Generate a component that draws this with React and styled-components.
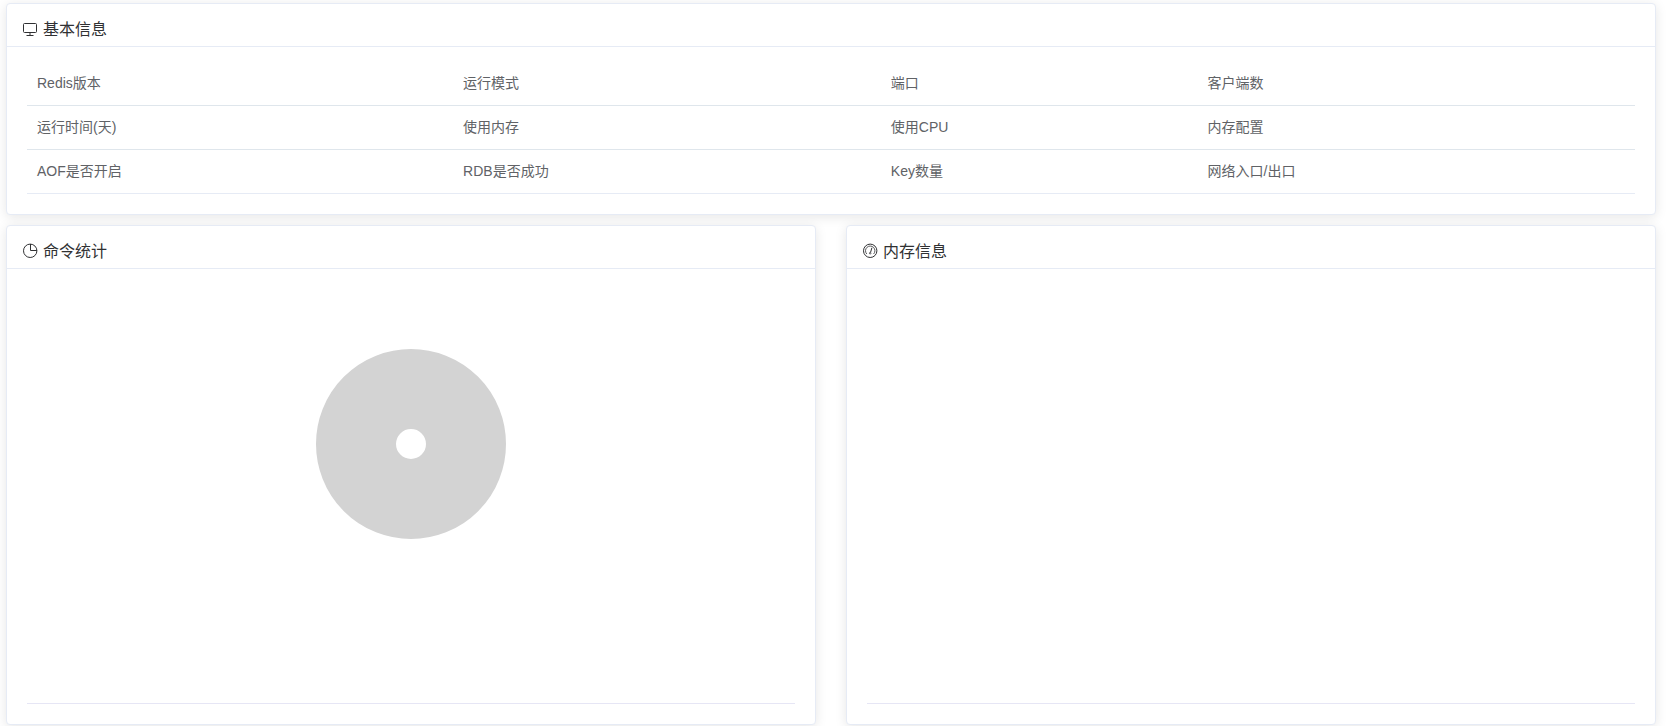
import React from "react";
import styled, { createGlobalStyle } from "styled-components";

const GlobalStyle = createGlobalStyle`
  *, *::before, *::after { box-sizing: border-box; }
  body {
    margin: 0;
    background: #fff;
    color: #606266;
    font-family: "Liberation Sans", "Noto Sans CJK SC", sans-serif;
    font-size: 14px;
  }
`;

const Page = styled.main`
  display: grid;
  grid-template-columns: 1fr 1fr;
  gap: 10px 30px;
  padding: 3px 12px 1px 6px;
`;

const Card = styled.section`
  grid-column: ${(p) => (p.$wide ? "1 / -1" : "auto")};
  min-width: 0;
  background: #fff;
  border: 1px solid #e6ebf5;
  border-radius: 4px;
  box-shadow: 0 2px 12px rgba(0, 0, 0, 0.1);
`;

const CardHeader = styled.header`
  display: flex;
  align-items: flex-start;
  gap: 5px;
  padding: 16px 15px 6px;
  border-bottom: 1px solid #e6ebf5;
  color: #303133;
`;

const CardTitle = styled.h2`
  margin: 0;
  font-size: 16px;
  font-weight: 400;
  line-height: 20px;
`;

const CardBody = styled.div`
  padding: 15px 20px 20px;
`;

const Icon = styled.svg`
  width: 16px;
  height: 16px;
  fill: none;
  stroke: currentColor;
  stroke-width: 1;
`;

const InfoTable = styled.table`
  width: 100%;
  table-layout: fixed;
  border-collapse: separate;
  border-spacing: 0;
`;

const Column = styled.col`
  width: ${(p) => p.$share};
`;

const Cell = styled.td`
  height: 44px;
  padding: 10px;
  border-bottom: 1px solid ${(p) => (p.$last ? "#e6ebf5" : "#dfe6ec")};
  line-height: 23px;
`;

const Chart = styled.div`
  display: flex;
  justify-content: center;
  height: 420px;
  padding-top: 65px;
  border-bottom: 1px solid #e6e6f5;
`;

const Donut = styled.svg`
  width: 190px;
  height: 190px;
`;

const MonitorIcon = () => (
  <Icon viewBox="0 0 16 16" aria-hidden="true">
    <rect x="1.5" y="3.5" width="13" height="9" rx="1" />
    <path d="M8 12.5v3M4.5 15.5h7" />
  </Icon>
);

const PieIcon = () => (
  <Icon viewBox="0 0 16 16" strokeWidth="0.9" aria-hidden="true">
    <circle cx="8.2" cy="8.8" r="6.7" />
    <path d="M8.5 2v6.5h6.4" />
  </Icon>
);

const OdometerIcon = () => (
  <Icon viewBox="0 0 16 16" aria-hidden="true">
    <circle cx="8.2" cy="8.8" r="6.7" />
    <path d="M4.8 12A4.7 4.7 0 1 1 11.6 12" strokeWidth="0.8" />
    <path d="M9.9 5.8L8.6 10.2" />
    <circle cx="8.2" cy="11.2" r="0.8" strokeWidth="0.8" />
  </Icon>
);

const columns = ["26.5%", "26.6%", "19.7%", "27.2%"];

const rows = [
  ["Redis版本", "运行模式", "端口", "客户端数"],
  ["运行时间(天)", "使用内存", "使用CPU", "内存配置"],
  ["AOF是否开启", "RDB是否成功", "Key数量", "网络入口/出口"],
];

const Panel = ({ icon, title, wide, children }) => (
  <Card $wide={wide}>
    <CardHeader>
      {icon}
      <CardTitle>{title}</CardTitle>
    </CardHeader>
    <CardBody>{children}</CardBody>
  </Card>
);

export default function App() {
  return (
    <>
      <GlobalStyle />
      <Page>
        <Panel wide icon={<MonitorIcon />} title="基本信息">
          <InfoTable>
            <colgroup>
              {columns.map((share) => (
                <Column key={share} $share={share} />
              ))}
            </colgroup>
            <tbody>
              {rows.map((row, i) => (
                <tr key={row[0]}>
                  {row.map((label) => (
                    <Cell key={label} $last={i === rows.length - 1}>
                      {label}
                    </Cell>
                  ))}
                </tr>
              ))}
            </tbody>
          </InfoTable>
        </Panel>
        <Panel icon={<PieIcon />} title="命令统计">
          <Chart>
            <Donut viewBox="0 0 190 190" role="img" aria-label="命令统计">
              <circle cx="95" cy="95" r="55" fill="none" stroke="#d3d3d3" strokeWidth="80" />
            </Donut>
          </Chart>
        </Panel>
        <Panel icon={<OdometerIcon />} title="内存信息">
          <Chart />
        </Panel>
      </Page>
    </>
  );
}
